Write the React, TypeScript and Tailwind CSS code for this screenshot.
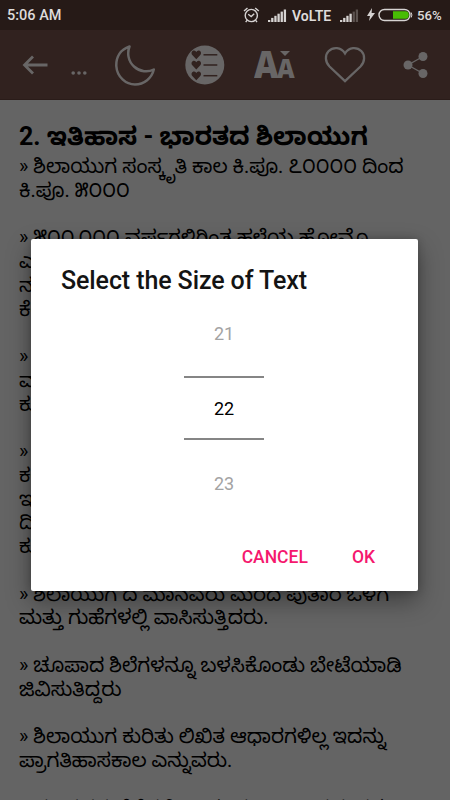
import React from 'react';

const lines: string[] = [
  '» ಶಿಲಾಯುಗ ಸಂಸ್ಕೃತಿ ಕಾಲ ಕಿ.ಪೂ. ೭೦೦೦೦ ದಿಂದ',
  'ಕಿ.ಪೂ. ೫೦೦೦',
  '',
  '» ೫೦೦,೦೦೦ ವರ್ಷಗಳಿಗಿಂತ ಹಳೆಯ ಹೋಮೊ',
  'ಎಂದು',
  'ನಡೆದ',
  'ಕೆಲವು',
  '',
  '» ಭಾರತದ',
  'ಮಾನವರು',
  'ಕುರುಹು',
  '',
  '» ಶಿಲಾಯುಗ',
  'ಕಲೆಗಳು',
  'ಇದು',
  'ದಿನದ',
  'ಕುರಿತು',
  '',
  '» ಶಿಲಾಯುಗ ದ ಮಾನವರು ಮರದ ಪುತಾರ ಒಳಗೆ',
  'ಮತ್ತು ಗುಹೆಗಳಲ್ಲಿ ವಾಸಿಸುತ್ತಿದರು.',
  '',
  '» ಚೂಪಾದ ಶಿಲೆಗಳನ್ನೂ ಬಳಸಿಕೊಂಡು ಬೇಟೆಯಾಡಿ',
  'ಜಿವಿಸುತಿದ್ದರು',
  '',
  '» ಶಿಲಾಯುಗ ಕುರಿತು ಲಿಖಿತ ಆಧಾರಗಳಿಲ್ಲ ಇದನ್ನು',
  'ಪ್ರಾಗತಿಹಾಸಕಾಲ ಎನ್ನುವರು.',
  '',
];

function Signal({ weak = false }: { weak?: boolean }) {
  return (
    <svg width="19" height="13" viewBox="0 0 19 13" fill="#d6d3d2">
      {[0, 1, 2, 3, 4, 5].map((i) => (
        <rect key={i} x={i * 3.15} y={11 - i * 2.1} width="2.3" height={2 + i * 2.1} opacity={weak && i > 3 ? 0.3 : 1} />
      ))}
    </svg>
  );
}

function StatusBar() {
  return (
    <div className="flex h-[30px] items-center bg-[#261a17] text-[#dedbda]">
      <span className="ml-[7px] mt-[2px] w-[236px] text-[14.5px] font-medium leading-none">5:06 AM</span>
      <svg className="shrink-0" width="17" height="17" viewBox="0 0 17 17" fill="none" stroke="#d6d3d2" strokeWidth="1.4">
        <circle cx="8.3" cy="8.5" r="6.1" />
        <path d="M1 4 4.5 1M12.2 1l3.6 3M5.2 7.3l3 2.2 3-2.7M4.2 13.2l-1.5 2M12.5 13.2l1.5 2" />
      </svg>
      <span className="ml-[8px] shrink-0"><Signal /></span>
      <span className="ml-[5px] mt-[1px] w-[48px] shrink-0 text-[14px] font-semibold leading-none">VoLTE</span>
      <span className="shrink-0"><Signal weak /></span>
      <svg className="ml-[8px] shrink-0" width="8" height="14" viewBox="0 0 8 14" fill="#d6d3d2"><path d="M5 0 0 8h3L2 13l6-8H4.6z" /></svg>
      <svg className="ml-[3px] shrink-0" width="35" height="14" viewBox="0 0 35 14">
        <rect x="1" y="1.5" width="31" height="11" rx="5.5" fill="none" stroke="#d6d3d2" strokeWidth="1.4" />
        <path d="M33.2 4.5q1.4 2.5 0 5" fill="none" stroke="#d6d3d2" />
        <path d="M15 3.3h12.5q3.3 0 3.3 3.7t-3.3 3.7H15z" fill="#48bd05" />
      </svg>
      <span className="ml-[4px] mt-[1px] shrink-0 text-[13.2px] font-medium leading-none">56%</span>
    </div>
  );
}

function AppBar() {
  return (
    <div className="flex h-[70px] items-center border-b border-[#2a1c19] bg-[#31221f] text-[#686666]">
      <svg className="ml-[22px] shrink-0" width="27" height="20" viewBox="0 0 27 20" fill="none" stroke="currentColor" strokeWidth="2.8"><path d="M25.5 10H3M11 1.5 2.5 10l8.5 8.5" /></svg>
      <svg className="ml-[22px] mt-[17px] shrink-0" width="16" height="4" viewBox="0 0 16 4" fill="currentColor"><circle cx="2.2" cy="2" r="1.8" /><circle cx="8" cy="2" r="1.8" /><circle cx="13.8" cy="2" r="1.8" /></svg>
      <svg className="ml-[26px] shrink-0" width="42" height="42" viewBox="0 0 42 42" fill="none" stroke="currentColor" strokeWidth="2.5" strokeLinejoin="round"><path d="M16.5 2.5C7.5 5.5 3 13 3.3 22C4 33 13 40.5 22 40.5C31 40.5 39 34 40.8 25.5C35 28.5 27 28 21 22.5C15 17 14 9 16.5 2.5Z" /></svg>
      <svg className="ml-[30px] shrink-0" width="40" height="40" viewBox="0 0 40 40">
        <circle cx="19.8" cy="20" r="19.5" fill="currentColor" />
        {[9.8, 20, 30.7].map((y) => (
          <g key={y} transform={`translate(11.3 ${y})`}>
            <path d="M0 4.5L-4 .3C-5.800-2-4-4.300-2.200-4.200Q-.6-4.100 0-2.700Q.6-4.100 2.200-4.200C4-4.300 5.800-2 4 .3Z" fill="#31221f" />
            <path d="M7.2 0H21" stroke="#31221f" strokeWidth="1.5" />
          </g>
        ))}
      </svg>
      <div className="relative ml-[29px] h-[42px] w-[42px] shrink-0 font-['Open_Sans',sans-serif] font-extrabold leading-[40px]">
        <div className="flex items-baseline">
          <span className="w-[23px] origin-left scale-x-[0.91] text-[37px]">A</span>
          <span className="origin-left scale-x-[0.9] text-[27px]">A</span>
        </div>
        <svg className="absolute left-[26px] top-[7px]" width="10" height="6" viewBox="0 0 10 6" fill="currentColor"><path d="M0 0h10L5 5z" /></svg>
      </div>
      <svg className="ml-[28px] shrink-0" width="42" height="38" viewBox="0 0 42 38" fill="none" stroke="currentColor" strokeWidth="2.3"><path d="M21 35.2 5.5 20.5C1 16 .8 9 4.5 5.3C9 .8 17 .8 21 7.5C25 .8 33 .8 37.5 5.3C41.2 9 41 16 36.5 20.5Z" /></svg>
      <svg className="ml-[37px] shrink-0" width="26" height="28" viewBox="0 0 26 28" fill="currentColor"><path d="M20 5.5 5 14l15 8.5" fill="none" stroke="currentColor" strokeWidth="1.3" /><circle cx="5" cy="14" r="4.5" /><circle cx="20" cy="5.5" r="4.5" /><circle cx="20" cy="22.5" r="4.5" /></svg>
    </div>
  );
}

function SizeDialog() {
  return (
    <div className="absolute left-[31px] top-[239px] flex h-[352px] w-[387px] flex-col rounded-[2px] bg-white shadow-[0_10px_24px_rgba(0,0,0,0.38),0_0_8px_rgba(0,0,0,0.2)]">
      <h2 className="ml-[30px] mt-[27px] h-[30px] whitespace-nowrap text-[25px] font-medium leading-[30px] tracking-[-0.1px] text-[#141414]">Select the Size of Text</h2>
      <div className="ml-[153px] mt-[26px] flex w-[80px] flex-col text-center text-[18px] leading-[24px]">
        <div className="h-[54px] text-[#a3a3a3]">21</div>
        <div className="flex h-[64px] items-center justify-center border-y-2 border-[#858585] pt-[2px] text-black">22</div>
        <div className="mt-[32px] text-[#a3a3a3]">23</div>
      </div>
      <div className="mr-[43px] mt-[49px] flex justify-end text-[17.5px] font-medium leading-[24px] text-[#f5186e]">
        <button className="mr-[44px]">CANCEL</button>
        <button>OK</button>
      </div>
    </div>
  );
}

export default function App() {
  return (
    <div className="relative h-[800px] w-[450px] overflow-hidden bg-[#646464] font-['Roboto','Noto_Sans_Kannada','Noto_Sans',sans-serif] text-black">
      <StatusBar />
      <AppBar />
      <div className="pl-[19px] pt-[19px]">
        <h1 className="h-[36px] whitespace-nowrap text-[25px] font-bold leading-[35px]">2. ಇತಿಹಾಸ - ಭಾರತದ ಶಿಲಾಯುಗ</h1>
        {lines.map((line, i) => (
          <p key={i} className="h-[23.75px] whitespace-nowrap text-[20px] leading-[23.75px]">{line}</p>
        ))}
        <p className="mt-[1px] whitespace-nowrap text-[20px] leading-[23.75px]">» ಮಾನವನ ಬೆಳೆದ ಶಿಲಾಯುಗ ೫೦೦೦ ವರ್ಷಗಳ</p>
      </div>
      <SizeDialog />
    </div>
  );
}
